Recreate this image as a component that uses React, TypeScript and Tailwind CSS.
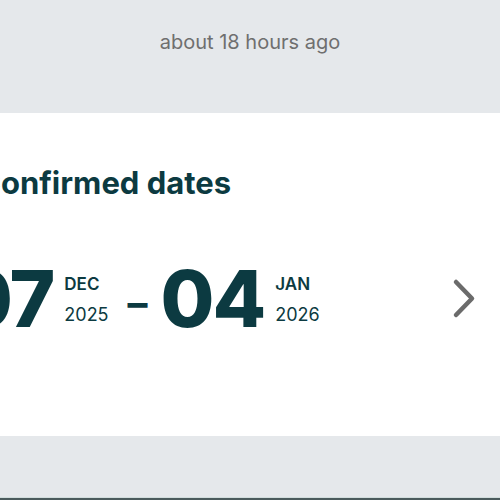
// Booking summary strip: last-updated note, confirmed dates card, footer band.

function ChevronRight() {
  return (
    <svg
      width="28"
      height="42"
      viewBox="0 0 28 42"
      fill="none"
      stroke="#6b6b6b"
      strokeWidth="4.5"
      strokeLinecap="round"
      strokeLinejoin="round"
      aria-hidden="true"
    >
      <path d="M6 4 L22 20.5 L6 37" />
    </svg>
  );
}

type DateParts = { day: string; month: string; year: string };

function DateBlock({ day, month, year }: DateParts) {
  return (
    <div className="flex items-center">
      <span className="text-[78px] font-extrabold leading-none tracking-[-2px] text-[#0c3a41]">
        {day}
      </span>
      <div className="ml-[11px] flex flex-col">
        <span className="text-[17px] font-semibold leading-[22px] text-[#0c3a41]">
          {month}
        </span>
        <span className="mt-[9px] text-[18px] leading-[22px] text-[#0c3a41]">{year}</span>
      </div>
    </div>
  );
}

export default function App() {
  return (
    <div className="flex h-[500px] w-[500px] flex-col overflow-hidden bg-[#e5e8eb] font-['Inter','Liberation_Sans',sans-serif]">
      <div className="flex h-[113px] justify-center pt-[28px]">
        <span className="text-[20px] leading-[28px] text-[#6f6f6f]">about 18 hours ago</span>
      </div>

      <div className="h-[323px] bg-white">
        <div className="ml-[-22px] pt-[50px]">
          <h2 className="text-[31px] font-bold leading-[40px] text-[#0c3a41]">
            Confirmed dates
          </h2>
        </div>

        <div className="mt-[57px] flex items-center">
          <div className="ml-[-41px] flex items-center">
            <DateBlock day="07" month="DEC" year="2025" />
            <span className="ml-[19px] mr-[13px] pt-[8px] text-[40px] font-bold leading-none text-[#0c3a41]">
              –
            </span>
            <DateBlock day="04" month="JAN" year="2026" />
          </div>
          <button type="button" aria-label="Next" className="ml-auto mr-[22px] flex items-center">
            <ChevronRight />
          </button>
        </div>
      </div>

      <div className="flex-1" />
      <div className="h-px bg-[#d2dddd]" />
      <div className="h-[2px] bg-[#4a5a5c]" />
    </div>
  );
}
